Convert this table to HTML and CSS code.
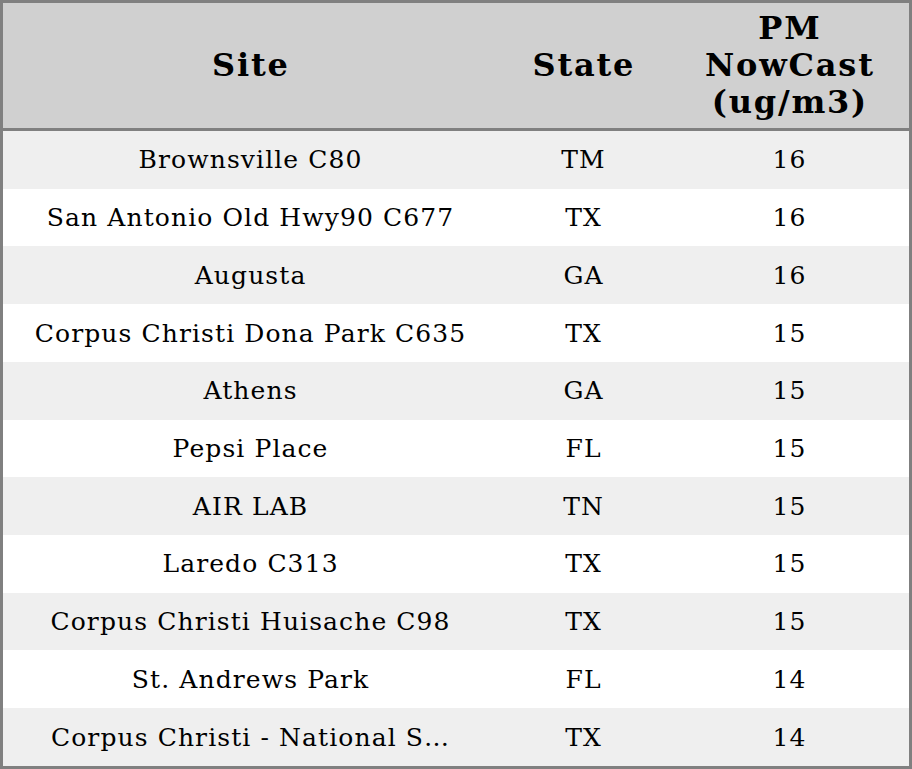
FILE: index.html
```html
<!DOCTYPE html>
<html>
<head>
<meta charset="utf-8">
<link rel="stylesheet" href="styles.css">
</head>
<body>
<table class="aq-table">
  <colgroup>
    <col class="col-site">
    <col class="col-state">
    <col class="col-pm">
  </colgroup>
  <thead>
    <tr>
      <th>Site</th>
      <th>State</th>
      <th>PM<br>NowCast<br>(ug/m3)</th>
    </tr>
  </thead>
  <tbody>
    <tr><td>Brownsville C80</td><td>TM</td><td>16</td></tr>
    <tr><td>San Antonio Old Hwy90 C677</td><td>TX</td><td>16</td></tr>
    <tr><td>Augusta</td><td>GA</td><td>16</td></tr>
    <tr><td>Corpus Christi Dona Park C635</td><td>TX</td><td>15</td></tr>
    <tr><td>Athens</td><td>GA</td><td>15</td></tr>
    <tr><td>Pepsi Place</td><td>FL</td><td>15</td></tr>
    <tr><td>AIR LAB</td><td>TN</td><td>15</td></tr>
    <tr><td>Laredo C313</td><td>TX</td><td>15</td></tr>
    <tr><td>Corpus Christi Huisache C98</td><td>TX</td><td>15</td></tr>
    <tr><td>St. Andrews Park</td><td>FL</td><td>14</td></tr>
    <tr><td>Corpus Christi - National S…</td><td>TX</td><td>14</td></tr>
  </tbody>
</table>
</body>
</html>
```
FILE: styles.css
```css
html, body {
  margin: 0;
  padding: 0;
  background: #ffffff;
}
.aq-table {
  width: 912px;
  height: 769px;
  border-collapse: separate;
  border-spacing: 0;
  border: 3px solid #808080;
  box-sizing: border-box;
  table-layout: fixed;
  font-family: "DejaVu Serif", serif;
  color: #000;
}
.col-site { width: 494px; }
.col-state { width: 172px; }
.col-pm { width: 240px; }
.aq-table th {
  background: #d0d0d0;
  font-size: 32px;
  font-weight: bold;
  text-align: center;
  height: 125px;
  padding: 0 0 0 1.8px;
  letter-spacing: 1.8px;
  border-bottom: 3px solid #808080;
  line-height: 37px;
}
.aq-table td {
  font-size: 25px;
  letter-spacing: 1.1px;
  text-align: center;
  padding: 0 0 0 1.1px;
  white-space: nowrap;
  overflow: hidden;
}
.aq-table tbody tr:nth-child(odd) td {
  background: #efefef;
}
.aq-table tbody tr:nth-child(even) td {
  background: #ffffff;
}
```
